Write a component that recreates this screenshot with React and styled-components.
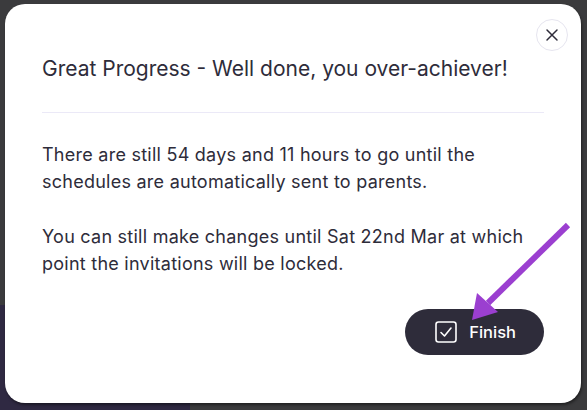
import React from 'react';
import styled, { createGlobalStyle } from 'styled-components';

const GlobalStyle = createGlobalStyle`
  html, body {
    margin: 0;
    padding: 0;
    background: #3b3b3d;
    font-family: Inter, "Noto Sans", sans-serif;
  }
`;

// dimmed app behind the dialog
const Screen = styled.div`
  position: relative;
  width: 587px;
  height: 410px;
  overflow: hidden;
  background:
    linear-gradient(#2f2942, #2f2942) 0 305px / 190px 105px no-repeat,
    #3b3b3d;
  padding: 4px 6px 0 5px;
  box-sizing: border-box;
`;

const Modal = styled.div`
  position: relative;
  height: 399px;
  background: #fff;
  border-radius: 20px;
  box-shadow: 1px 2px 3px rgba(0, 0, 0, 0.45);
  padding: 50px 37px 0 37px;
  box-sizing: border-box;
  display: flex;
  flex-direction: column;
  color: #2e2c3a;
`;

const CloseButton = styled.button`
  position: absolute;
  top: 15px;
  right: 13px;
  width: 32px;
  height: 32px;
  border-radius: 50%;
  border: 1px solid #e6e5ef;
  background: #fff;
  display: flex;
  align-items: center;
  justify-content: center;
  padding: 0;
  color: #2e2c3a;
`;

const Title = styled.h2`
  margin: 0;
  font-size: 21px;
  font-weight: 400;
  line-height: 30px;
`;

const Divider = styled.hr`
  border: 0;
  border-top: 1px solid #ebe9f7;
  margin: 28px 0 28px;
`;

const Paragraph = styled.p`
  margin: 0 0 28px;
  max-width: 490px;
  font-size: 18px;
  letter-spacing: 0.25px;
  line-height: 27px;
`;

const Footer = styled.div`
  display: flex;
  justify-content: flex-end;
  margin-top: 4px;
`;

const FinishButton = styled.button`
  display: flex;
  align-items: center;
  gap: 12px;
  height: 46px;
  padding: 0 28px 0 30px;
  border: 0;
  border-radius: 23px;
  background: #2e2c3a;
  color: #fff;
  font-family: Inter, "Noto Sans", sans-serif;
  font-size: 16.5px;
  font-weight: 500;
`;

const Arrow = styled.svg`
  position: absolute;
  left: 0;
  top: 0;
  pointer-events: none;
`;

export default function App() {
  return (
    <>
      <GlobalStyle />
      <Screen>
        <Modal>
          <CloseButton aria-label="Close">
            <svg width="14" height="14" viewBox="0 0 14 14" fill="none" stroke="currentColor" strokeWidth="1.5" strokeLinecap="round">
              <path d="M2 2 L12 12 M12 2 L2 12" />
            </svg>
          </CloseButton>
          <Title>Great Progress - Well done, you over-achiever!</Title>
          <Divider />
          <Paragraph>
            There are still 54 days and 11 hours to go until the schedules are automatically sent to parents.
          </Paragraph>
          <Paragraph>
            You can still make changes until Sat 22nd Mar at which point the invitations will be locked.
          </Paragraph>
          <Footer>
            <FinishButton>
              <svg width="22" height="22" viewBox="0 0 22 22" fill="none" stroke="currentColor" strokeWidth="1.6" strokeLinecap="round" strokeLinejoin="round">
                <rect x="1" y="1" width="20" height="20" rx="2.5" />
                <path d="M6 11.5 L9.5 15 L16 7" />
              </svg>
              Finish
            </FinishButton>
          </Footer>
        </Modal>
        <Arrow width="587" height="410" viewBox="0 0 587 410">
          <path d="M568 225 L488 303" stroke="#9b3fd0" strokeWidth="6" fill="none" />
          <path d="M472 320 L477 293 L498 312 Z" fill="#9b3fd0" />
        </Arrow>
      </Screen>
    </>
  );
}
